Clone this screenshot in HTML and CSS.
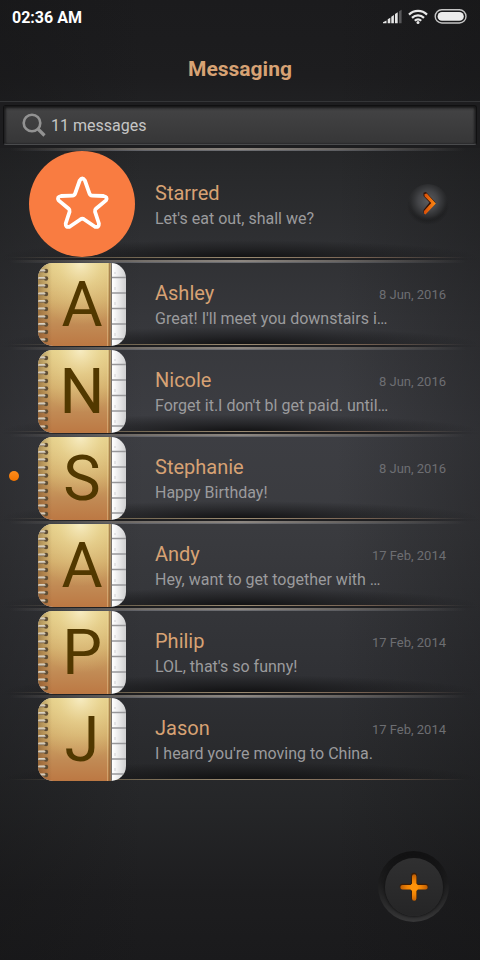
FILE: index.html
```html
<!DOCTYPE html>
<html lang="en">
<head>
<meta charset="utf-8">
<meta name="viewport" content="width=device-width, initial-scale=1">
<title>Messaging</title>
<link rel="stylesheet" href="styles.css">
</head>
<body>
<svg class="defs" aria-hidden="true">
  <defs>
    <linearGradient id="cover" x1="0" y1="0" x2="0" y2="1">
      <stop offset="0" stop-color="#dfc983"/><stop offset=".45" stop-color="#d0aa68"/><stop offset=".75" stop-color="#c18a54"/><stop offset="1" stop-color="#bc7843"/>
    </linearGradient>
    <radialGradient id="shine" cx=".58" cy="0" r=".75">
      <stop offset="0" stop-color="#fff8d8" stop-opacity=".75"/><stop offset=".4" stop-color="#f8e8a8" stop-opacity=".4"/><stop offset="1" stop-color="#f0d890" stop-opacity="0"/>
    </radialGradient>
    <linearGradient id="edge" x1="0" y1="0" x2="1" y2="0">
      <stop offset="0" stop-color="#5a3714" stop-opacity=".4"/><stop offset="1" stop-color="#5a3714" stop-opacity="0"/>
    </linearGradient>
    <linearGradient id="wire" x1="0" y1="0" x2="0" y2="1">
      <stop offset="0" stop-color="#e6dfd0"/><stop offset=".5" stop-color="#cdc4b4"/><stop offset="1" stop-color="#6e5a44"/>
    </linearGradient>
    <linearGradient id="page" x1="0" y1="0" x2="1" y2="0">
      <stop offset="0" stop-color="#c4c4c6"/><stop offset=".2" stop-color="#efeff0"/><stop offset=".85" stop-color="#fff"/><stop offset="1" stop-color="#cfcfd0"/>
    </linearGradient>
    <clipPath id="book"><rect width="88" height="83" rx="15"/></clipPath>
    <g id="ring">
      <circle cx="8" cy="0" r="2.2" fill="#5d4c34"/>
      <rect x="0" y="-1.6" width="7.5" height="2.8" rx="1.4" fill="url(#wire)"/>
    </g>
  </defs>
  <symbol id="notebook" viewBox="0 0 88 83">
    <g clip-path="url(#book)">
      <rect width="88" height="83" fill="url(#page)"/>
      <path d="M73 14.500h15M73 30h15M73 45.500h15M73 61h15M73 76h15" stroke="#98989a" stroke-width="1.500"/>
      <path d="M77 9v2M77 24v3M77 39v3M77 55v3M77 70v3" stroke="#d2d2d6"/>
      <rect width="73" height="83" fill="url(#cover)"/>
      <rect width="73" height="83" fill="url(#shine)"/>
      <rect width="14" height="83" fill="url(#edge)"/>
      <path d="M69.500 0v83" stroke="#edd7a0" stroke-opacity=".4" stroke-width="1"/>
      <path d="M71.500 0v83" stroke="#8e6538" stroke-opacity=".7" stroke-width="1.500"/>
      <path d="M73.300 0v83" stroke="#77716a" stroke-width="1.400"/>
      <use href="#ring" y="8"/><use href="#ring" y="15.500"/><use href="#ring" y="23"/><use href="#ring" y="31"/><use href="#ring" y="38.500"/><use href="#ring" y="46"/><use href="#ring" y="54"/><use href="#ring" y="61.500"/><use href="#ring" y="69"/><use href="#ring" y="77"/>
    </g>
  </symbol>
</svg>

<div class="app">
  <div class="status">
    <span>02:36 AM</span>
    <svg class="status-icons" viewBox="0 0 86 18" aria-hidden="true">
      <path d="M1 15.200v-1l3.500-1.700v2.700zM5.700 15.200v-4l2.600-1.500v5.500zM9.300 15.200V8.700l2.600-1.600v8.100zM13 15.200V6l2.700-1.800v11z" fill="#e4e4e4"/>
      <path d="M17 15.200V3.200l2.600-1.500v13.500z" fill="#58585a"/>
      <g fill="none" stroke="#e8e8e8" stroke-width="2.200">
        <path d="M27 6.600a12.800 12.800 0 0 1 18 0M30 9.900a8.500 8.500 0 0 1 12 0M32.800 12.800a4.500 4.500 0 0 1 6.400 0"/>
      </g>
      <circle cx="36" cy="14.400" r="1.500" fill="#e8e8e8"/>
      <rect x="53.200" y="1.800" width="30.800" height="13.200" rx="6.600" fill="none" stroke="#c4c4c4" stroke-width="1.400"/>
      <rect x="55.600" y="4" width="26.200" height="8.800" rx="4.400" fill="#ebebeb"/>
    </svg>
  </div>
  <h1 class="title">Messaging</h1>

  <div class="search-bar">
    <label class="search">
      <svg class="search-icon" viewBox="0 0 24 24" aria-hidden="true">
        <circle cx="10" cy="10" r="8.300" fill="none" stroke="#929292" stroke-width="2.600"/>
        <path d="M16 16l6.500 6.500" stroke="#929292" stroke-width="3.200"/>
      </svg>
      <input type="search" placeholder="11 messages" aria-label="Search messages">
    </label>
  </div>

  <ul class="list">
    <li class="row starred">
      <a class="link" href="#starred">
        <span class="avatar">
          <svg class="star" viewBox="0 0 106 106" aria-hidden="true">
            <circle cx="53" cy="53" r="53" fill="#f97c41"/>
            <path d="M50.700 29.500q2.600-4 5.200 0l4.600 13.200q.6 1.800 2.700 1.900l11.400.4q4.300.8 2.400 4.400L66.900 57.800q-1.300 1.100-.9 2.800l3.900 11.900q.3 4.200-3.900 3.300L54.900 68.200q-1.600-1-3.200 0L40.600 75.800q-4.200.9-3.900-3.300L40.600 60.600q.4-1.700-.9-2.800L29.600 49.400q-1.900-3.600 2.400-4.400l11.400-.4q2.100-.1 2.700-1.900z" fill="none" stroke="#fff" stroke-width="3.800" stroke-linejoin="round"/>
          </svg>
        </span>
        <span class="text">
          <span class="name">Starred</span>
          <span class="preview">Let's eat out, shall we?</span>
        </span>
        <svg class="go" viewBox="0 0 44 44" aria-hidden="true">
          <defs>
            <radialGradient id="ball" cx=".5" cy=".42" r=".5">
              <stop offset="0" stop-color="#5b5c5f"/><stop offset=".5" stop-color="#434447"/><stop offset=".8" stop-color="#2f3032" stop-opacity=".9"/><stop offset="1" stop-color="#2a2b2d" stop-opacity="0"/>
            </radialGradient>
            <radialGradient id="ballshade"><stop offset=".5" stop-color="#101011" stop-opacity=".7"/><stop offset="1" stop-color="#101011" stop-opacity="0"/></radialGradient>
            <linearGradient id="arrow" x1="0" x2="1"><stop offset="0" stop-color="#d64c08"/><stop offset="1" stop-color="#ff8b12"/></linearGradient>
          </defs>
          <ellipse cx="22" cy="25" rx="21" ry="18" fill="url(#ballshade)"/>
          <circle cx="22" cy="22" r="20" fill="url(#ball)"/>
          <path d="M17.500 10.800l2.500-.8 9.500 10.600-9.500 10.700-2.500-.8v-2.500l6-7.500-6-6.500z" fill="#301206"/>
          <path d="M18.500 12l2.300-.6 9 10-10.300 11-1.500-.8v-2.700l7.200-8-6.700-6.700z" fill="url(#arrow)"/>
        </svg>
      </a>
    </li>
    <li class="row">
      <a class="link" href="#ashley">
        <span class="avatar"><svg class="book"><use href="#notebook"/></svg><span class="initial">A</span></span>
        <span class="text"><span class="name">Ashley</span><span class="preview">Great! I'll meet you downstairs i…</span></span>
        <time class="date" datetime="2016-06-08">8 Jun, 2016</time>
      </a>
    </li>
    <li class="row">
      <a class="link" href="#nicole">
        <span class="avatar"><svg class="book"><use href="#notebook"/></svg><span class="initial">N</span></span>
        <span class="text"><span class="name">Nicole</span><span class="preview">Forget it.I don't bl get paid. until…</span></span>
        <time class="date" datetime="2016-06-08">8 Jun, 2016</time>
      </a>
    </li>
    <li class="row unread">
      <a class="link" href="#stephanie">
        <span class="avatar"><svg class="book"><use href="#notebook"/></svg><span class="initial">S</span></span>
        <span class="text"><span class="name">Stephanie</span><span class="preview">Happy Birthday!</span></span>
        <time class="date" datetime="2016-06-08">8 Jun, 2016</time>
      </a>
    </li>
    <li class="row">
      <a class="link" href="#andy">
        <span class="avatar"><svg class="book"><use href="#notebook"/></svg><span class="initial">A</span></span>
        <span class="text"><span class="name">Andy</span><span class="preview">Hey, want to get together with …</span></span>
        <time class="date" datetime="2014-02-17">17 Feb, 2014</time>
      </a>
    </li>
    <li class="row">
      <a class="link" href="#philip">
        <span class="avatar"><svg class="book"><use href="#notebook"/></svg><span class="initial">P</span></span>
        <span class="text"><span class="name">Philip</span><span class="preview">LOL, that's so funny!</span></span>
        <time class="date" datetime="2014-02-17">17 Feb, 2014</time>
      </a>
    </li>
    <li class="row">
      <a class="link" href="#jason">
        <span class="avatar"><svg class="book"><use href="#notebook"/></svg><span class="initial">J</span></span>
        <span class="text"><span class="name">Jason</span><span class="preview">I heard you're moving to China.</span></span>
        <time class="date" datetime="2014-02-17">17 Feb, 2014</time>
      </a>
    </li>
  </ul>

  <button class="compose" type="button" aria-label="New message">
    <span class="compose-face">
      <svg class="plus" viewBox="0 0 30 30" aria-hidden="true">
        <defs><radialGradient id="glow" cx="15" cy="16" r="14" gradientUnits="userSpaceOnUse"><stop offset="0" stop-color="#ff9a0c"/><stop offset=".5" stop-color="#f08305"/><stop offset="1" stop-color="#b95a04"/></radialGradient></defs>
        <path d="M15 3.500v22M3.500 14.500h23" stroke="#3c1d04" stroke-width="5.600" stroke-linecap="round"/>
        <path d="M15.200 4.500v22M3.500 15.300h23" stroke="url(#glow)" stroke-width="4.400" stroke-linecap="round"/>
        <circle cx="15.200" cy="15.300" r="4" fill="#ff930a"/>
      </svg>
    </span>
  </button>
</div>
</body>
</html>
```
FILE: styles.css
```css
* {
  box-sizing: border-box;
}

body {
  margin: 0;
  background: #1b1b1d;
  font-family: Roboto, "Liberation Sans", sans-serif;
}

.defs {
  position: absolute;
  width: 0;
  height: 0;
}

.app {
  position: relative;
  min-height: 100vh;
  background:
    linear-gradient(90deg, rgba(20, 20, 21, 0.35), transparent 30%, transparent 70%, rgba(20, 20, 21, 0.35)),
    linear-gradient(#1b1b1d 0%, #1d1d1f 8%, #28292b 18%, #36373b 33%, #3d3e43 45%, #3a3b3f 55%, #303135 70%, #252628 84%, #1d1d1f 93%, #1a1a1c 100%);
}

.status {
  display: flex;
  justify-content: space-between;
  align-items: center;
  height: 34px;
  padding: 0 12px;
  color: #fff;
  font-size: 16px;
  font-weight: 700;
}

.status-icons {
  width: 86px;
  height: 18px;
}

.title {
  margin: 0;
  height: 67px;
  color: #d7a274;
  font-size: 21px;
  font-weight: 700;
  line-height: 70px;
  text-align: center;
}

.search-bar {
  padding: 3px;
  border-top: 1px solid #343537;
  background: #1d1d1f;
}

.search {
  display: flex;
  align-items: center;
  gap: 5px;
  height: 40px;
  padding: 0 18px;
  border: 1px solid #101011;
  border-bottom-color: #4a4b4d;
  border-radius: 3px;
  background: linear-gradient(#444445, #363637);
  box-shadow: inset 0 2px 3px #161617, inset 2px 0 2px #29292a, inset -2px 0 2px #29292a;
}

.search-icon {
  width: 24px;
  height: 24px;
}

.search input {
  flex: 1;
  min-width: 0;
  padding: 0;
  border: 0;
  outline: 0;
  background: none;
  color: #c6c6c6;
  font: 16px Roboto, "Liberation Sans", sans-serif;
}

.search input::placeholder {
  color: #c6c6c6;
}

.list {
  margin: 0;
  padding: 0;
  list-style: none;
}

.row {
  position: relative;
  height: 87px;
  padding: 3px 0 1px;
  background:
    linear-gradient(90deg, transparent 2%, #75706b 30%, #8d8781 50%, #6a6663 70%, transparent 97%) 0 0 / 100% 2px no-repeat,
    linear-gradient(90deg, transparent 2%, #64656a 30%, #6e6f73 50%, #5d5e62 70%, transparent 97%) 0 2px / 100% 1px no-repeat,
    linear-gradient(90deg, transparent 2%, #776a54 30%, #9b8b72 50%, #776252 75%, transparent 97%) 0 calc(100% - 2px) / 100% 1px no-repeat,
    linear-gradient(90deg, transparent, #1e1e20 20%, #1e1e20 80%, transparent) 0 100% / 100% 2px no-repeat,
    radial-gradient(ellipse 50% 100% at 50% 100%, rgba(14, 14, 15, 0.9), rgba(14, 14, 15, 0.5) 40%, transparent) 0 calc(100% - 3px) / 100% 17px no-repeat;
}

.row:last-child {
  background-size: 100% 2px, 100% 1px, 100% 1px, 0 0, 100% 17px;
}

.starred {
  height: 112px;
}

.link {
  display: flex;
  align-items: flex-start;
  height: 100%;
  padding-right: 34px;
  color: inherit;
  text-decoration: none;
}

.avatar {
  display: grid;
  flex: none;
  width: 155px;
  padding-left: 38px;
}

.starred .avatar {
  padding-left: 29px;
}

.book,
.initial {
  grid-area: 1 / 1;
  width: 88px;
  height: 83px;
}

.star {
  width: 106px;
  height: 106px;
}

.initial {
  color: #513800;
  font-size: 63px;
  line-height: 84px;
  text-align: center;
}

.text {
  display: flex;
  flex: 1;
  flex-direction: column;
  min-width: 0;
  padding-top: 16px;
}

.starred .text {
  padding-top: 28px;
}

.name {
  color: #d7a274;
  font-size: 20px;
  line-height: 28px;
}

.preview {
  color: #9b9b9d;
  font-size: 16px;
  line-height: 24px;
  white-space: nowrap;
}

.date {
  padding-top: 22px;
  color: #6d6e72;
  font-size: 13px;
  line-height: 20px;
}

.starred .link {
  padding-right: 30px;
}

.go {
  width: 44px;
  height: 44px;
  margin-top: 31px;
}

.unread::before {
  content: "";
  position: absolute;
  top: 37px;
  left: 9px;
  width: 10px;
  height: 10px;
  border-radius: 50%;
  background: linear-gradient(#ff8d1c, #f47500);
}

.compose {
  position: absolute;
  right: 31px;
  bottom: 38px;
  display: grid;
  place-items: center;
  width: 71px;
  height: 71px;
  padding: 0;
  border: 0;
  border-radius: 50%;
  background: linear-gradient(#111112, #1c1c1d 45%, #373738);
  cursor: pointer;
}

.compose-face {
  display: grid;
  place-items: center;
  width: 58px;
  height: 58px;
  border-radius: 50%;
  background: linear-gradient(#303031, #252526);
  box-shadow: 0 0 3px 1px #141415;
}

.plus {
  width: 30px;
  height: 30px;
}
```
